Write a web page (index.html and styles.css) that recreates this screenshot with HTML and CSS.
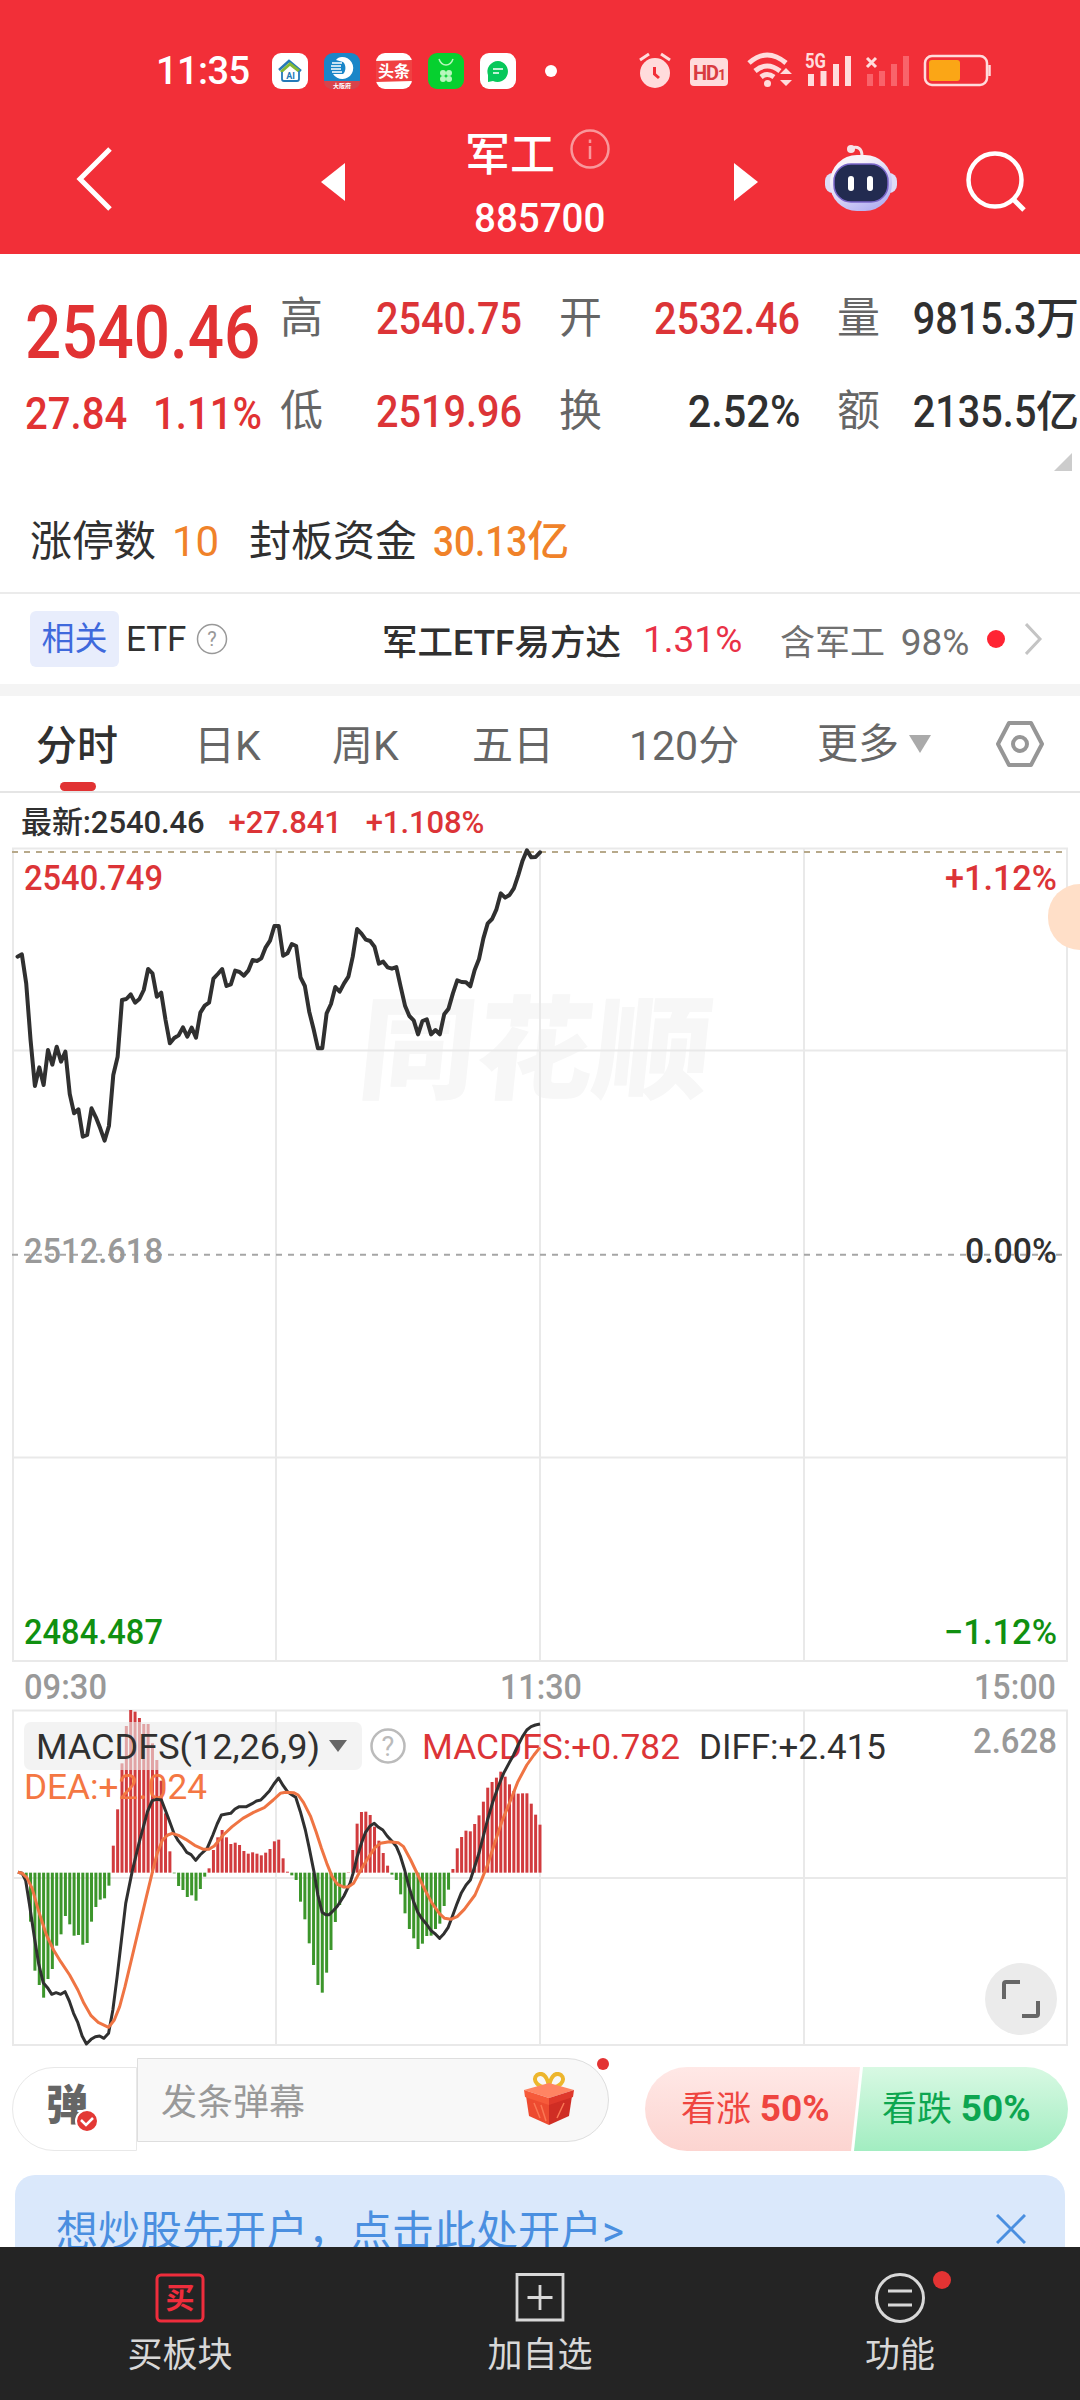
FILE: index.html
```html
<!DOCTYPE html>
<html lang="zh-CN">
<head>
    <meta charset="UTF-8">
    <meta name="viewport" content="width=device-width, initial-scale=1.0">
    <title>军工 885700</title>
    <link rel="stylesheet" href="styles.css">
</head>
<body>
    <!-- Header -->
    <header>
        <div class="status">
            <span class="clock">11:35</span>
            <div class="apps">
                <svg width="36" height="36" viewBox="0 0 36 36">
                    <rect width="36" height="36" rx="9" fill="#fff"/>
                    <path d="M7 17 L17 8 L29 18" fill="none" stroke="#2579b8" stroke-width="2.5"/>
                    <path d="M9 19 L18 11 L27 18" fill="none" stroke="#83b935" stroke-width="3"/>
                    <path d="M10 19 V26 Q10 28 12 28 H25 Q27 28 27 26 V18" fill="none" stroke="#2579b8" stroke-width="1.8"/>
                    <text x="18.5" y="26" class="t-ai">AI</text>
                </svg>
                <svg width="36" height="36" viewBox="0 0 36 36">
                    <rect width="36" height="36" rx="9" fill="#1a86c8"/>
                    <path d="M0 28 H36 Q36 36 27 36 H9 Q0 36 0 28Z" fill="#d8434b"/>
                    <path d="M18 4 A11 11 0 1 1 9 21 L19 21 A5 7 0 0 0 19 9 L12 7 Q14 4 18 4Z" fill="#fff"/>
                    <path d="M8 10 H18 M7 13 H17 M7 16 H17 M8 19 H18" stroke="#fff" stroke-width="1.5"/>
                    <text x="18" y="34.5" class="t-bank">大阪府</text>
                </svg>
                <svg width="36" height="36" viewBox="0 0 36 36">
                    <rect width="36" height="36" rx="9" fill="#fff"/>
                    <path d="M0 8 L36 7 V28 L0 29Z" fill="#f04142"/>
                    <text x="18" y="24" class="t-news">头条</text>
                </svg>
                <svg width="36" height="36" viewBox="0 0 36 36">
                    <rect width="36" height="36" rx="9" fill="#06d02f"/>
                    <path d="M11 6 Q13 12 18 12 Q23 12 25 6" fill="none" stroke="#b8f7bd" stroke-width="1.5"/>
                    <g fill="#b8f7bd"><circle cx="15" cy="20" r="3"/><circle cx="21" cy="20" r="3"/><circle cx="15" cy="26" r="3"/><circle cx="21" cy="26" r="3"/></g>
                </svg>
                <svg width="36" height="36" viewBox="0 0 36 36">
                    <rect width="36" height="36" rx="9" fill="#fff"/>
                    <path d="M18 8 A10.500 10.500 0 1 1 13 28 L8 29 L8 22 A10.500 10.500 0 0 1 18 8Z" fill="#07c85a"/>
                    <path d="M13 16 H23 M13 20 H19" stroke="#fff" stroke-width="1.6"/>
                </svg>
                <i class="more-dot"></i>
            </div>
            <svg class="signals" width="352" height="48" viewBox="640 47 352 48">
                <g fill="#ffdcdc">
                    <circle cx="656" cy="73" r="15"/>
                    <path d="M641 60 L650 54 M671 60 L662 54" stroke="#ffdcdc" stroke-width="3"/>
                    <path d="M655.500 67 V74 L660 78" fill="none" stroke="#f22f38" stroke-width="3"/>
                    <rect x="691" y="58" width="38" height="28" rx="4"/>
                    <path d="M781 74 L787 68 L793 74Z M781 80 L787 86 L793 80Z"/>
                    <circle cx="768.500" cy="83.500" r="3.500"/>
                </g>
                <text x="710" y="80" class="t-hd">HD<tspan font-size="14">1</tspan></text>
                <path d="M750 63 Q768 47 787 63 M756 71 Q768 61 781 71 M762 77 Q768 72 775 77" fill="none" stroke="#ffdcdc" stroke-width="5"/>
                <text x="806" y="68" class="t-5g" textLength="21" lengthAdjust="spacingAndGlyphs">5G</text>
                <path d="M812 74 V86 M824.500 71 V86 M837 64 V86 M849 56 V86" stroke="#ffdcdc" stroke-width="6"/>
                <path d="M868 58 L877 67 M877 58 L868 67" stroke="#ffdcdc" stroke-width="3"/>
                <path d="M871 74 V86 M883 71 V86 M895 64 V86 M907 56 V86" stroke="#f9636a" stroke-width="6"/>
                <rect x="926" y="56" width="62" height="29" rx="7" fill="none" stroke="#ffdcdc" stroke-width="2.500"/>
                <rect x="930" y="60" width="31" height="21" rx="3" fill="#fba616"/>
                <path d="M990.500 65 V76" stroke="#ffdcdc" stroke-width="2.500"/>
            </svg>
        </div>
        <div class="titlebar">
            <svg class="back" width="40" height="68" viewBox="0 0 40 68"><path d="M36 4 L6 34 L36 64" fill="none" stroke="#fff" stroke-width="5"/></svg>
            <svg class="prev" width="24" height="38" viewBox="0 0 24 38"><path d="M24 0 V38 L0 19Z" fill="#fff"/></svg>
            <div class="title">
                <div class="name">军工
                    <svg width="40" height="40" viewBox="0 0 40 40"><circle cx="20" cy="20" r="18.500" fill="none" stroke="#f9979b" stroke-width="2.500"/><path d="M20 17 V30 M20 10.500 V14" stroke="#f9979b" stroke-width="2.500"/></svg>
                </div>
                <div class="code">885700</div>
            </div>
            <svg class="next" width="24" height="38" viewBox="0 0 24 38"><path d="M0 0 V38 L24 19Z" fill="#fff"/></svg>
            <svg class="robot" width="72" height="68" viewBox="0 0 72 68">
                <defs><linearGradient id="head" x1="0" y1="0" x2="0.600" y2="1"><stop offset="0.300" stop-color="#f8f3f9"/><stop offset="1" stop-color="#b5b3f2"/></linearGradient></defs>
                <path d="M26 4 Q37 1 37 12" fill="none" stroke="#f6e3e8" stroke-width="3"/>
                <circle cx="26" cy="5" r="4" fill="#f6e3e8"/>
                <rect x="0" y="29" width="72" height="20" rx="8" fill="#dedcf6"/>
                <rect x="5" y="11" width="62" height="56" rx="27" fill="url(#head)"/>
                <rect x="9" y="20" width="54" height="38" rx="17" fill="#222b50" stroke="#7965c8" stroke-width="1.500"/>
                <rect x="23" y="32" width="6" height="15" rx="3" fill="#fff"/><rect x="42" y="32" width="6" height="15" rx="3" fill="#fff"/>
            </svg>
            <svg class="search" width="62" height="62" viewBox="0 0 62 62"><circle cx="29" cy="29" r="26.500" fill="none" stroke="#fff" stroke-width="4.500"/><path d="M48 49 L58 59" stroke="#fff" stroke-width="5"/></svg>
        </div>
    </header>

    <!-- Quote summary -->
    <section class="quote">
        <div class="last">
            <div class="price"><span class="num">2540.46</span></div>
            <div class="change"><span class="num">27.84</span><span class="num">1.11%</span></div>
        </div>
        <dl class="facts">
            <dt>高</dt><dd class="up"><span class="num">2540.75</span></dd>
            <dt>开</dt><dd class="up"><span class="num">2532.46</span></dd>
            <dt>量</dt><dd><span class="num">9815.3</span>万</dd>
            <dt>低</dt><dd class="up"><span class="num">2519.96</span></dd>
            <dt>换</dt><dd><span class="num rate">2.52%</span></dd>
            <dt>额</dt><dd><span class="num">2135.5</span>亿</dd>
        </dl>
        <i class="corner"></i>
    </section>
    <section class="limit">
        <span class="l1">涨停数</span><b class="l2">10</b><span class="l3">封板资金</span><b class="l4"><span class="num">30.13</span>亿</b>
    </section>
    <section class="etf">
        <span class="tag">相关</span><span class="etf-word">ETF</span>
        <svg class="help" width="32" height="32" viewBox="0 0 32 32"><circle cx="16" cy="16" r="14.500" fill="none" stroke="#999" stroke-width="1.500"/><text x="16" y="23">?</text></svg>
        <span class="fund">军工ETF易方达</span><span class="pct">1.31%</span><span class="hold">含军工 <span>98%</span></span>
        <i class="red-dot"></i>
        <svg class="chev" width="18" height="32" viewBox="0 0 18 32"><path d="M1 1 L15 16 L1 31" fill="none" stroke="#c4c4c4" stroke-width="3"/></svg>
    </section>

    <!-- Period tabs -->
    <nav class="tabs">
        <a class="active">分时</a><a>日K</a><a>周K</a><a>五日</a><a>120分</a><a>更多<i></i></a>
        <svg width="48" height="48" viewBox="0 0 48 48"><path d="M13 3 H35 L46 24 L35 45 H13 L2 24Z" fill="none" stroke="#969696" stroke-width="4" stroke-linejoin="round"/><circle cx="24" cy="24" r="7" fill="none" stroke="#969696" stroke-width="4"/></svg>
    </nav>
    <div class="latest"><span>最新:2540.46</span><span class="up">+27.841</span><span class="up">+1.108%</span></div>

    <!-- Charts -->
    <div class="charts">
        <svg width="1080" height="1200" viewBox="0 847 1080 1200">
            <text class="watermark" x="360" y="1090" textLength="352" lengthAdjust="spacingAndGlyphs" transform="translate(110 0) skewX(-6)">同花顺</text>
            <path class="grid" d="M13 848.500 H1067 V1661 H13 Z M13 1050.500 H1067 M13 1457.500 H1067 M276 848 V1661 M540 848 V1661 M804 848 V1661"/>
            <path class="grid" d="M13 1710.500 H1067 V2045 H13 Z M13 1878 H1067 M276 1710 V2045 M540 1710 V2045 M804 1710 V2045"/>
            <path class="dash top" d="M12 852 H1067"/>
            <path class="dash" d="M12 1254.700 H1067"/>
            <polyline id="price"/>
            <g id="bars"></g>
            <g class="labels">
                <text x="24" y="890" class="up" textLength="139" lengthAdjust="spacingAndGlyphs">2540.749</text>
                <text x="945" y="890" class="up" textLength="112" lengthAdjust="spacingAndGlyphs">+1.12%</text>
                <text x="24" y="1263" class="dim" textLength="139" lengthAdjust="spacingAndGlyphs">2512.618</text>
                <text x="965" y="1263" class="ink" textLength="92" lengthAdjust="spacingAndGlyphs">0.00%</text>
                <text x="24" y="1644" class="down" textLength="139" lengthAdjust="spacingAndGlyphs">2484.487</text>
                <text x="944" y="1644" class="down" textLength="113" lengthAdjust="spacingAndGlyphs">−1.12%</text>
                <text x="24" y="1699" class="dim" textLength="83" lengthAdjust="spacingAndGlyphs">09:30</text>
                <text x="500" y="1699" class="dim" textLength="82" lengthAdjust="spacingAndGlyphs">11:30</text>
                <text x="974" y="1699" class="dim" textLength="82" lengthAdjust="spacingAndGlyphs">15:00</text>
                <text x="973" y="1753" class="dim" textLength="84" lengthAdjust="spacingAndGlyphs">2.628</text>
                <rect x="24" y="1722" width="338" height="48" rx="7" fill="#ebebeb" fill-opacity="0.600"/>
                <text x="36" y="1759" class="ink thin" textLength="284" lengthAdjust="spacingAndGlyphs">MACDFS(12,26,9)</text>
                <path d="M329 1740 H347 L338 1752Z" fill="#666"/>
                <circle cx="388" cy="1746" r="16.500" fill="none" stroke="#bbb" stroke-width="2.500"/>
                <text x="388" y="1756" class="q">?</text>
                <text x="422" y="1759" class="up thin" textLength="258" lengthAdjust="spacingAndGlyphs">MACDFS:+0.782</text>
                <text x="699" y="1759" class="ink thin" textLength="187" lengthAdjust="spacingAndGlyphs">DIFF:+2.415</text>
                <text x="24" y="1799" class="dea-text thin" textLength="183" lengthAdjust="spacingAndGlyphs">DEA:+2.024</text>
            </g>
            <polyline id="diff"/>
            <polyline id="dea"/>
        </svg>
        <i class="float-tab"></i>
        <button class="expand"><svg width="38" height="38" viewBox="0 0 38 38"><path d="M2 19 V4 Q2 2 4 2 H18 M20 36 H34 Q36 36 36 34 V21" fill="none" stroke="#666" stroke-width="4"/></svg></button>
    </div>

    <!-- Comment and vote -->
    <section class="actions">
        <div class="danmu">弹<svg width="24" height="24" viewBox="0 0 24 24"><circle cx="12" cy="12" r="11" fill="#e33935" stroke="#fff" stroke-width="2"/><path d="M6 11 L11 16 L18 9" fill="none" stroke="#fff" stroke-width="2.500"/></svg></div>
        <div class="comment">
            <span>发条弹幕</span>
            <svg width="50" height="54" viewBox="0 0 50 54">
                <path d="M25 15 C15 17 7 8 13 3 C20 -1 24 7 25 15 C26 7 30 -1 37 3 C43 8 35 17 25 15" fill="none" stroke="#edb62d" stroke-width="4"/>
                <path d="M2 24 L25 31 V53 L5 44Z" fill="#ed4b30"/><path d="M48 24 L25 31 V53 L45 44Z" fill="#cf2d24"/>
                <path d="M0 18 L25 11 L50 18 L25 26Z" fill="#ff8463"/><path d="M0 18 L25 26 V33 L1 25Z" fill="#f65a3a"/><path d="M50 18 L25 26 V33 L49 25Z" fill="#df382b"/>
                <path d="M10 31 L16 46 M17 33 L22 49 M40 31 L33 46" stroke="#fa7754" stroke-width="1.500"/>
            </svg>
            <i class="badge"></i>
        </div>
        <div class="vote"><span class="bull">看涨 <b>50%</b></span><span class="bear">看跌 <b>50%</b></span></div>
    </section>
    <section class="banner"><span>想炒股先开户，点击此处开户&gt;</span><svg width="30" height="30" viewBox="0 0 30 30"><path d="M1 1 L29 29 M29 1 L1 29" stroke="#4a8fe0" stroke-width="3"/></svg></section>

    <!-- Bottom bar -->
    <footer>
        <div class="item">
            <svg width="50" height="50" viewBox="0 0 50 50"><rect x="2" y="2" width="46" height="46" rx="4" fill="none" stroke="#ef2d3c" stroke-width="3"/><text x="25" y="36" class="t-buy">买</text></svg>
            <span>买板块</span>
        </div>
        <div class="item">
            <svg width="50" height="50" viewBox="0 0 50 50"><path d="M2 1.500 H48 V47 H2Z M25 12 V37 M12.500 24.500 H37.500" fill="none" stroke="#d8d8d8" stroke-width="2.800"/></svg>
            <span>加自选</span>
        </div>
        <div class="item">
            <svg width="52" height="50" viewBox="0 1 52 50"><circle cx="26" cy="26" r="23.500" fill="none" stroke="#d8d8d8" stroke-width="3"/><path d="M14 19 H38 M14 33 H38" stroke="#d8d8d8" stroke-width="3"/></svg>
            <span>功能</span>
            <i class="badge"></i>
        </div>
    </footer>
    <script src="app.js"></script>
</body>
</html>
```
FILE: styles.css
```css
/* General Styles */
* {
    box-sizing: border-box;
}

body {
    font-family: Roboto, 'Noto Sans CJK SC', sans-serif;
    margin: 0;
    width: 1080px;
    height: 2400px;
    overflow: hidden;
    background: #fff;
    color: #303030;
    white-space: nowrap;
}

svg {
    display: block;
    flex: none;
}

i {
    display: block;
    flex: none;
}

.up {
    color: #dc3437;
    fill: #dc3437;
}

/* Header */
header {
    height: 254px;
    background: #f22f38;
    color: #fff;
}

.status {
    display: flex;
    align-items: center;
    height: 102px;
    padding: 40px 0 0 156px;
}

.clock {
    width: 116px;
    font-size: 38px;
    font-weight: 500;
    letter-spacing: -0.6px;
}

.apps {
    display: flex;
    align-items: center;
    gap: 16px;
}

.more-dot {
    width: 12px;
    height: 12px;
    margin-left: 13px;
    border-radius: 50%;
    background: #fff;
}

.signals {
    margin-left: 82px;
}

.t-ai, .t-bank, .t-news, .t-hd, .t-buy {
    text-anchor: middle;
    font-weight: bold;
}

.t-ai {
    font-size: 9px;
    fill: #2579b8;
}

.t-bank {
    font-size: 6px;
    fill: #fff;
}

.t-news {
    font-size: 16px;
    fill: #fff;
}

.t-hd {
    font-size: 20px;
    fill: #d93b40;
    letter-spacing: -1px;
}

.t-5g {
    font-size: 20px;
    font-weight: bold;
    fill: #ffdcdc;
}

.titlebar {
    display: flex;
    height: 152px;
    padding-left: 74px;
}

.back {
    margin-top: 43px;
}

.prev {
    margin: 61px 0 0 207px;
}

.title {
    width: 389px;
    padding: 13px 0 0 120px;
}

.name {
    display: flex;
    align-items: center;
    gap: 15px;
    height: 72px;
    font-size: 45px;
    font-weight: 500;
}

.name svg {
    margin-top: -4px;
}

.code {
    margin: 1px 0 0 9px;
    height: 60px;
    line-height: 60px;
    font-size: 41px;
    font-weight: 500;
    transform: scaleX(0.94);
    transform-origin: left;
}

.next {
    margin-top: 61px;
}

.robot {
    margin: 42px 0 0 67px;
}

.search {
    margin: 49px 0 0 69px;
}

/* Quote summary */
.quote {
    position: relative;
    display: flex;
    height: 222px;
    padding: 18px 0 0 25px;
}

.num {
    display: inline-block;
    font-weight: 500;
    transform: scaleX(0.88);
    transform-origin: right;
}

.last {
    width: 254px;
    padding-top: 14px;
    color: #e13233;
}

.last .num {
    transform-origin: left;
}

.price {
    height: 92px;
    line-height: 92px;
    font-size: 75px;
}

.price .num {
    transform: scaleX(0.85);
}

.change {
    display: flex;
    height: 70px;
    line-height: 72px;
    font-size: 44px;
}

.change .num {
    width: 127px;
    transform: scaleX(0.91);
}

.change .num + .num {
    margin-left: 1px;
}

.facts {
    display: grid;
    grid-template-columns: 44px 199px 80px 198px 80px 199px;
    grid-template-rows: 93px 93px;
    width: 803px;
    margin: 0;
    line-height: 93px;
}

.facts dt {
    font-size: 43px;
    color: #666;
    text-align: right;
}

.facts dd {
    margin: 0;
    font-size: 43px;
    font-weight: 500;
    text-align: right;
}

.facts .num {
    font-size: 45px;
}

.facts .rate {
    transform: scaleX(0.92);
}

.corner {
    position: absolute;
    right: 8px;
    bottom: 5px;
    border-left: 18px solid transparent;
    border-bottom: 18px solid #ccc;
}

.limit {
    display: flex;
    height: 118px;
    padding-left: 30px;
    line-height: 131px;
    font-size: 42px;
    border-bottom: 2px solid #ebebeb;
}

.limit b {
    font-weight: 500;
    color: #f08229;
}

.l1 {
    width: 142px;
}

.limit .l2 {
    width: 77px;
    font-weight: 400;
}

.l3 {
    width: 184px;
}

.l4 .num {
    transform-origin: left;
    margin-right: -13px;
}

/* Related ETF */
.etf {
    display: flex;
    align-items: center;
    height: 102px;
    padding-left: 30px;
    border-bottom: 12px solid #f4f4f4;
    font-size: 35px;
}

.tag {
    width: 89px;
    height: 56px;
    line-height: 56px;
    border-radius: 6px;
    background: #e8edfc;
    color: #3f69dc;
    font-size: 33px;
    text-align: center;
}

.etf-word {
    width: 71px;
    padding-left: 7px;
    font-size: 35px;
}

.help {
    margin-left: 6px;
}

.help text {
    font-size: 20px;
    fill: #999;
    text-anchor: middle;
}

.fund {
    width: 261px;
    margin-left: 154px;
    font-weight: 500;
    font-size: 35.5px;
}

.pct {
    width: 137px;
    color: #e93146;
    font-size: 37px;
}

.hold {
    width: 207px;
    color: #707070;
}

.hold span {
    margin-left: 7px;
    font-size: 37px;
}

.red-dot {
    width: 18px;
    height: 18px;
    border-radius: 50%;
    background: #ff2433;
}

.chev {
    margin-left: 20px;
}

/* Period tabs */
.tabs {
    display: flex;
    align-items: center;
    height: 97px;
    padding-left: 36px;
    border-bottom: 2px solid #e5e5e5;
    font-size: 41px;
    color: #666;
}

.tabs a {
    position: relative;
    height: 95px;
    line-height: 100px;
}

.tabs a:nth-child(1) {
    width: 158px;
}

.tabs a:nth-child(2) {
    width: 138px;
}

.tabs a:nth-child(3) {
    width: 140px;
}

.tabs a:nth-child(4) {
    width: 157px;
}

.tabs a:nth-child(5) {
    width: 188px;
}

.tabs a:nth-child(6) {
    display: flex;
    align-items: center;
    width: 179px;
}

.tabs a i {
    margin-left: 10px;
    border: 11px solid transparent;
    border-top: 18px solid #aaa;
    border-bottom: 0;
}

.tabs .active {
    color: #303030;
    font-weight: 500;
}

.tabs .active::after {
    content: '';
    position: absolute;
    left: 24px;
    bottom: 0;
    width: 36px;
    height: 9px;
    border-radius: 5px;
    background: #e13233;
}

.latest {
    display: flex;
    gap: 24px;
    height: 54px;
    line-height: 60px;
    padding-left: 21px;
    font-size: 31px;
    font-weight: 500;
    letter-spacing: -0.1px;
}

/* Charts */
.charts {
    position: relative;
    height: 1200px;
}

.grid {
    fill: none;
    stroke: #e9e9e9;
    stroke-width: 2;
}

.dash {
    stroke: #a6a6a6;
    stroke-width: 2;
    stroke-dasharray: 6 6;
}

.dash.top {
    stroke: #b7a98a;
}

.watermark {
    font-size: 112px;
    font-weight: 900;
    fill: #f7f7f7;
}

#price {
    fill: none;
    stroke: #303030;
    stroke-width: 4;
    stroke-linejoin: round;
    stroke-linecap: round;
}

#diff, #dea {
    fill: none;
    stroke: #303030;
    stroke-width: 3;
    stroke-linejoin: round;
}

#dea {
    stroke: #ef7443;
}

.rise {
    fill: #d13b3e;
}

.fall {
    fill: #3c962b;
}

.labels {
    font-size: 35px;
    font-weight: 500;
}

.labels .thin {
    font-weight: 400;
}

.labels .dim {
    fill: #999;
}

.labels .ink {
    fill: #303030;
}

.labels .down {
    fill: #109010;
}

.labels .dea-text {
    fill: #f47743;
}

.labels .q {
    font-size: 27px;
    font-weight: 400;
    fill: #bbb;
    text-anchor: middle;
}

.float-tab {
    position: absolute;
    right: 0;
    top: 37px;
    width: 32px;
    height: 66px;
    border-radius: 33px 0 0 33px;
    background: #ffdfc8;
}

.expand {
    position: absolute;
    left: 985px;
    top: 1116px;
    display: grid;
    place-items: center;
    width: 72px;
    height: 72px;
    padding: 0;
    border: 0;
    border-radius: 50%;
    background: #ebebeb;
}

/* Comment and vote */
.actions {
    display: flex;
    height: 128px;
    padding: 11px 12px 0 12px;
}

.danmu {
    position: relative;
    width: 125px;
    height: 84px;
    margin-top: 9px;
    padding-left: 33px;
    line-height: 76px;
    border: 1px solid #e8e8e8;
    border-radius: 42px 0 0 42px;
    font-size: 42px;
    font-weight: 900;
    color: #666;
}

.danmu svg {
    position: absolute;
    left: 62px;
    top: 41px;
}

.comment {
    position: relative;
    display: flex;
    align-items: center;
    justify-content: space-between;
    width: 472px;
    height: 84px;
    padding: 0 34px 2px 23px;
    border: 1px solid #dedede;
    border-radius: 0 42px 42px 0;
    background: #f8f8f8;
    font-size: 36px;
    color: #999;
}

.badge {
    position: absolute;
    border-radius: 50%;
    background: #e33333;
}

.comment .badge {
    right: -1px;
    top: -1px;
    width: 12px;
    height: 12px;
}

.vote {
    display: flex;
    width: 423px;
    height: 84px;
    margin: 9px 0 0 36px;
    line-height: 84px;
    font-size: 35px;
}

.vote span {
    width: 215px;
    padding-left: 36px;
    border-radius: 42px 0 0 42px;
    background: linear-gradient(#ffe8e6, #fcd4d0);
    color: #ef4540;
    clip-path: polygon(0 0, 100% 0, 206px 100%, 0 100%);
}

.vote .bear {
    width: 217px;
    margin-left: -9px;
    padding-left: 31px;
    border-radius: 0 42px 42px 0;
    background: linear-gradient(#d8f9e3, #a2edc1);
    color: #0da650;
    clip-path: polygon(12px 0, 100% 0, 100% 100%, 3px 100%);
}

.vote b {
    font-size: 37px;
}

/* Account banner */
.banner {
    display: flex;
    justify-content: space-between;
    height: 72px;
    margin: 0 15px;
    padding: 39px 39px 0 41px;
    overflow: hidden;
    border-radius: 20px 20px 0 0;
    background: #dae8fb;
    color: #4a8fe0;
    font-size: 42px;
    line-height: 36px;
}

/* Bottom bar */
footer {
    position: relative;
    display: grid;
    grid-template-columns: repeat(3, 1fr);
    height: 153px;
    background: #242424;
    color: #d8d8d8;
}

.item {
    position: relative;
    display: flex;
    flex-direction: column;
    align-items: center;
    padding-top: 26px;
    font-size: 35px;
}

.item span {
    margin-top: 8px;
    line-height: 50px;
}

.t-buy {
    font-size: 29px;
    fill: #ef2d3c;
}

.item .badge {
    left: 213px;
    top: 24px;
    width: 18px;
    height: 18px;
}
```
FILE: app.js
```js
// minute values, three units per pixel below the top of each plot
const price = [350, 343, 430, 600, 738, 682, 735, 630, 674, 620, 665, 635, 762, 820, 808, 890, 885, 805, 832, 865,
    902, 858, 705, 650, 480, 477, 463, 488, 477, 450, 387, 400, 470, 458, 540, 610, 594, 586, 562, 590,
    563, 593, 518, 497, 488, 416, 402, 387, 438, 433, 392, 396, 407, 392, 360, 363, 355, 322, 302, 258,
    258, 347, 340, 312, 318, 412, 438, 515, 567, 625, 625, 520, 492, 441, 455, 430, 410, 350, 267, 281,
    299, 303, 320, 371, 365, 382, 386, 381, 440, 497, 528, 541, 583, 543, 538, 583, 570, 583, 523, 506,
    460, 421, 426, 427, 439, 390, 357, 295, 250, 237, 208, 160, 173, 165, 145, 106, 62, 31, 52, 51, 37];

const macd = [758, 760, 775, 905, 1052, 1095, 1133, 1077, 1047, 977, 943, 888, 913, 947, 945, 974, 969, 905, 861, 839,
    835, 797, 677, 568, 430, 318, 270, 275, 294, 312, 312, 370, 420, 482, 580, 694, 760, 798, 810, 831,
    826, 842, 807, 770, 745, 690, 652, 630, 652, 672, 668, 675, 693, 701, 697, 701, 706, 698, 687, 664,
    659, 715, 755, 766, 780, 845, 898, 970, 1035, 1095, 1118, 1058, 990, 906, 855, 805, 757, 690, 611, 576,
    575, 585, 620, 662, 699, 737, 764, 780, 823, 880, 927, 955, 987, 971, 948, 947, 927, 911, 858, 809,
    747, 685, 651, 632, 634, 612, 586, 545, 503, 486, 473, 455, 470, 493, 513, 521, 520, 520, 551, 584, 614];

const diff = [[50, 757], [62, 760], [72, 782], [82, 850], [96, 950], [108, 1030], [121, 1088], [133, 1103], [145, 1123],
    [157, 1118], [170, 1123], [182, 1115], [194, 1143], [206, 1180], [218, 1208], [230, 1248], [242, 1272], [255, 1258],
    [267, 1250], [279, 1248], [291, 1255], [304, 1240], [316, 1170], [328, 1070], [340, 960], [352, 850], [370, 755],
    [389, 670], [413, 575], [426, 542], [438, 538], [452, 540], [470, 590], [487, 640], [499, 662], [511, 678],
    [523, 697], [535, 704], [548, 721], [560, 705], [580, 685], [596, 645], [608, 612], [620, 585], [634, 582],
    [646, 580], [658, 567], [670, 560], [690, 560], [706, 551], [718, 543], [730, 540], [743, 526], [755, 512],
    [767, 492], [780, 474], [793, 497], [805, 515], [818, 525], [828, 532], [841, 575], [855, 630], [865, 680],
    [880, 760], [890, 825], [902, 877], [912, 884], [922, 884], [935, 870], [945, 858], [963, 828], [980, 790],
    [990, 755], [1000, 710], [1012, 670], [1023, 638], [1036, 618], [1048, 610], [1060, 622], [1072, 630], [1084, 648],
    [1097, 663], [1110, 680], [1121, 708], [1133, 750], [1145, 800], [1158, 845], [1170, 877], [1182, 897], [1194, 912],
    [1207, 932], [1219, 942], [1231, 955], [1243, 941], [1255, 922], [1268, 885], [1280, 850], [1292, 818], [1305, 795],
    [1317, 780], [1329, 740], [1341, 700], [1353, 650], [1365, 600], [1380, 545], [1395, 500], [1410, 460], [1425, 430],
    [1438, 405], [1451, 375], [1463, 350], [1475, 330], [1487, 320], [1499, 315], [1512, 312]];

const dea = [[50, 757], [62, 760], [75, 773], [90, 805], [110, 880], [130, 945], [150, 990], [170, 1025], [195, 1065],
    [218, 1110], [235, 1150], [255, 1187], [275, 1207], [304, 1222], [320, 1200], [335, 1160], [350, 1100], [370, 1010],
    [390, 920], [410, 830], [427, 755], [440, 700], [455, 660], [470, 645], [482, 640], [500, 646], [520, 658],
    [545, 676], [570, 688], [585, 688], [600, 678], [625, 645], [650, 620], [680, 595], [710, 577], [740, 563],
    [765, 540], [785, 520], [800, 517], [822, 518], [835, 525], [850, 548], [870, 590], [885, 635], [900, 685],
    [915, 730], [930, 770], [945, 793], [960, 800], [975, 801], [990, 790], [1010, 750], [1030, 715], [1050, 683],
    [1065, 670], [1090, 665], [1115, 668], [1130, 680], [1150, 720], [1170, 765], [1190, 810], [1210, 850], [1230, 880],
    [1245, 895], [1262, 898], [1280, 890], [1300, 868], [1330, 825], [1350, 775], [1365, 735], [1385, 670], [1405, 605],
    [1430, 540], [1450, 485], [1475, 435], [1495, 405], [1512, 382]];

const minuteX = i => 17.5 + i * 4.354;
const macdY = v => 1620 + v / 3;

function setPoints(id, points) {
    document.getElementById(id).setAttribute('points', points.map(p => p.join(',')).join(' '));
}

setPoints('price', price.map((v, i) => [minuteX(i), 840 + v / 3]));
setPoints('diff', diff.map(([x, y]) => [x / 2.8, macdY(y)]));
setPoints('dea', dea.map(([x, y]) => [x / 2.8, macdY(y)]));

const bars = document.getElementById('bars');
const zero = macdY(758);
macd.forEach((v, i) => {
    const bar = document.createElementNS('http://www.w3.org/2000/svg', 'rect');
    const y = macdY(v);
    bar.setAttribute('x', minuteX(i) - 1.5);
    bar.setAttribute('y', Math.min(y, zero));
    bar.setAttribute('width', 3);
    bar.setAttribute('height', Math.abs(y - zero));
    bar.setAttribute('class', y < zero ? 'rise' : 'fall');
    bars.appendChild(bar);
});
```
